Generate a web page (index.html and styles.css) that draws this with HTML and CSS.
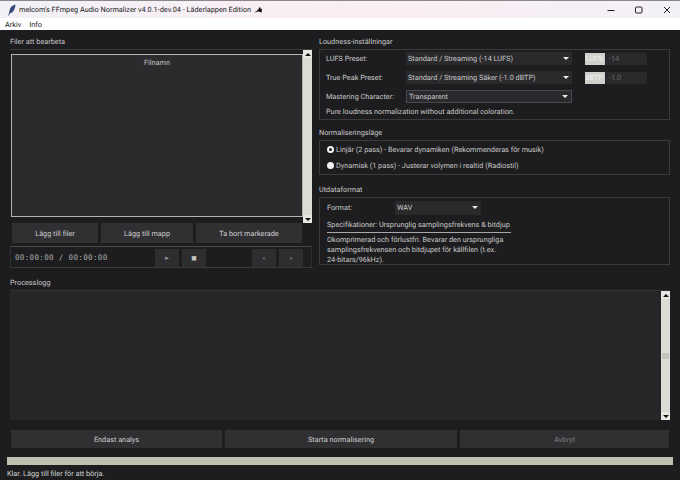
FILE: index.html
```html
<!DOCTYPE html>
<html lang="sv">
<head>
  <meta charset="UTF-8">
  <title>melcom's FFmpeg Audio Normalizer</title>
  <link rel="stylesheet" href="styles.css">
</head>
<body>
  <header class="titlebar">
    <svg class="app-icon" width="10" height="12" viewBox="0 0 10 12"><path d="M8.5 .5C5.5 1 3 3.5 2.5 6.5L2 9 1.2 11.5 2 11.6 3 9.2C6 9 8 6 8.5 .5Z" fill="#3a4a78"/></svg>
    <span class="title-text">melcom's FFmpeg Audio Normalizer v4.0.1-dev.04 - Läderlappen Edition</span>
    <svg class="bat-icon" width="8" height="7" viewBox="0 0 8 7"><path d="M0 6.5C2 5.5 3.5 4.5 4.5 3L6 .5 6.4 2.5 8 3 7.6 6.5 4.5 5.5Z" fill="#111"/></svg>
    <div class="window-controls">
      <svg width="8" height="8" viewBox="0 0 8 8"><path d="M.5 4.5h7" stroke="#222" fill="none"/></svg>
      <svg width="8" height="8" viewBox="0 0 8 8"><rect x=".5" y="1" width="6.5" height="6" rx="1" stroke="#222" fill="none"/></svg>
      <svg width="8" height="8" viewBox="0 0 8 8"><path d="M1 1l6 6M7 1L1 7" stroke="#222" fill="none"/></svg>
    </div>
  </header>
  <nav class="menubar"><span>Arkiv</span><span>Info</span></nav>

  <main class="app">
    <div class="top">
      <section class="left">
        <div class="section-label">Filer att bearbeta</div>
        <div class="files">
          <div class="file-list-wrap">
            <div class="file-list"><div class="file-head">Filnamn</div></div>
          </div>
          <div class="scrollbar">
            <div class="arrow"><i class="tri-up"></i></div>
            <div class="track"></div>
            <div class="arrow"><i class="tri-down"></i></div>
          </div>
        </div>
        <div class="file-buttons">
          <button class="btn">Lägg till filer</button>
          <button class="btn">Lägg till mapp</button>
          <button class="btn">Ta bort markerade</button>
        </div>
        <div class="player">
          <span class="time">00:00:00 / 00:00:00</span>
          <div class="player-btns">
            <button class="btn pbtn">►</button>
            <button class="btn pbtn stop">■</button>
          </div>
          <div class="player-btns">
            <button class="btn pbtn small">«</button>
            <button class="btn pbtn small">»</button>
          </div>
        </div>
      </section>

      <section class="right">
        <div class="section-label">Loudness-inställningar</div>
        <div class="frame loudness">
          <div class="row">
            <span class="row-label">LUFS Preset:</span>
            <div class="combo"><span>Standard / Streaming (-14 LUFS)</span><i class="combo-arrow"></i></div>
            <span class="chip">LUFS:</span>
            <span class="entry">-14</span>
          </div>
          <div class="row">
            <span class="row-label">True Peak Preset:</span>
            <div class="combo"><span>Standard / Streaming Säker (-1.0 dBTP)</span><i class="combo-arrow"></i></div>
            <span class="chip">dBTP:</span>
            <span class="entry">-1.0</span>
          </div>
          <div class="row">
            <span class="row-label">Mastering Character:</span>
            <div class="combo focus"><span>Transparent</span><i class="combo-arrow"></i></div>
          </div>
          <p class="note">Pure loudness normalization without additional coloration.</p>
        </div>

        <div class="section-label mode-label">Normaliseringsläge</div>
        <div class="frame mode">
          <div class="radio"><i class="dot on"></i>Linjär (2 pass) - Bevarar dynamiken (Rekommenderas för musik)</div>
          <div class="radio"><i class="dot"></i>Dynamisk (1 pass) - Justerar volymen i realtid (Radiostil)</div>
        </div>

        <div class="section-label out-label">Utdataformat</div>
        <div class="frame output">
          <div class="row format-row">
            <span class="format-label">Format:</span>
            <div class="combo format"><span>WAV</span><i class="combo-arrow"></i></div>
          </div>
          <div class="spec">Specifikationer: Ursprunglig samplingsfrekvens &amp; bitdjup</div>
          <p class="spec-text">Okomprimerad och förlustfri. Bevarar den ursprungliga<br>samplingsfrekvensen och bitdjupet för källfilen (t.ex.<br>24-bitars/96kHz).</p>
        </div>
      </section>
    </div>

    <section class="log">
      <div class="section-label">Processlogg</div>
      <div class="log-box">
        <div class="log-text"></div>
        <div class="scrollbar">
          <div class="arrow"><i class="tri-up"></i></div>
          <div class="track"><div class="thumb"></div></div>
          <div class="arrow"><i class="tri-down"></i></div>
        </div>
      </div>
    </section>

    <div class="actions">
      <button class="btn">Endast analys</button>
      <button class="btn">Starta normalisering</button>
      <button class="btn disabled">Avbryt</button>
    </div>
    <div class="progress"></div>
    <footer class="status">Klar. Lägg till filer för att börja.</footer>
  </main>
</body>
</html>
```

FILE: styles.css
```css
html, body {
  margin: 0;
  height: 480px;
  overflow: hidden;
}

body {
  font-family: Roboto, "Open Sans", sans-serif;
  font-size: 7.3px;
  text-rendering: geometricPrecision;
  color: #d0d0d0;
  background: #1d1d1f;
}

/* keeps the small text grey instead of colour fringed */
.titlebar, .menubar, .app {
  opacity: .999;
}

.titlebar {
  height: 18px;
  display: flex;
  align-items: center;
  padding-left: 7px;
  background: linear-gradient(90deg, #f2f1f6, #fbeef4 55%, #f3f1f6);
  color: #222;
  box-sizing: border-box;
  border-top: 1px solid #888;
}

.app-icon {
  margin-right: 2px;
}

.title-text {
  white-space: nowrap;
}

.bat-icon {
  margin-left: 3px;
}

.window-controls {
  margin-left: auto;
  display: flex;
  gap: 20px;
  padding-right: 9px;
}

.menubar {
  height: 12px;
  background: #fff;
  color: #222;
  display: flex;
  align-items: center;
  gap: 8px;
  padding-left: 5px;
}

.app {
  height: 450px;
  box-sizing: border-box;
  padding: 6px 10px 0;
}

.top {
  display: flex;
  gap: 7px;
}

.section-label {
  height: 13px;
  line-height: 11px;
  color: #c8c8c8;
}

.left {
  width: 302px;
}

.right {
  width: 351px;
}

.files {
  display: flex;
  height: 174px;
  box-sizing: border-box;
  border-top: 1px solid #3a3a3c;
}

.file-list-wrap {
  flex: 1;
  padding: 4px 0 0 1px;
}

.file-list {
  height: 163px;
  background: #2b2b2e;
  border: 1px solid #b4b4b0;
  box-sizing: border-box;
}

.file-head {
  text-align: center;
  color: #c4c4c4;
  line-height: 15px;
}

.file-buttons {
  display: grid;
  grid-template-columns: 86px 92px 106px;
  gap: 3px;
  padding-left: 2px;
}

.btn {
  height: 20px;
  padding: 0;
  border: 0;
  background: #303033;
  color: #cfcfcf;
  font-family: inherit;
  font-size: inherit;
  text-rendering: inherit;
}

.scrollbar {
  width: 9px;
  flex: none;
  display: flex;
  flex-direction: column;
  background: #dcdcd4;
}

.arrow {
  height: 8px;
  flex: none;
  display: flex;
  align-items: center;
  justify-content: center;
  background: #e8e8e2;
}

.tri-up, .tri-down {
  border-left: 3px solid transparent;
  border-right: 3px solid transparent;
}

.tri-up {
  border-bottom: 3px solid #111;
}

.tri-down {
  border-top: 3px solid #111;
}

.track {
  flex: 1;
  display: flex;
  align-items: center;
  justify-content: center;
}

.thumb {
  width: 7px;
  height: 6px;
  background: #c4c4bc;
}

.player {
  height: 22px;
  margin-top: 3px;
  display: flex;
  align-items: flex-end;
  border-top: 1px solid #4a4a4c;
  border-bottom: 1px solid #3a3a3c;
  border-left: 1px solid #2e2e30;
  border-right: 1px solid #2e2e30;
  box-sizing: border-box;
}

.time {
  width: 144px;
  padding-left: 4px;
  box-sizing: border-box;
  align-self: center;
  font-family: "DejaVu Sans Mono", monospace;
  font-size: 7.6px;
  letter-spacing: .3px;
  color: #a8a8a8;
}

.player-btns {
  display: flex;
  gap: 3px;
}

.player-btns + .player-btns {
  margin-left: 46px;
}

.pbtn {
  width: 24px;
  height: 18px;
  font-size: 6px;
  color: #999;
  background: #2e2e31;
}

.pbtn.stop {
  font-size: 9px;
  color: #c4c4c4;
}

.frame {
  border: 1px solid #3a3a3c;
  box-sizing: border-box;
}

.loudness {
  height: 71px;
  padding: 2px 0 0 6px;
}

.row {
  display: flex;
  align-items: center;
  height: 13px;
  margin-bottom: 6px;
}

.row-label {
  width: 80px;
  color: #c8c8c8;
}

.combo {
  width: 166px;
  height: 13px;
  display: flex;
  align-items: center;
  justify-content: space-between;
  padding: 0 3px 0 2px;
  box-sizing: border-box;
  background: #2a2a2d;
  color: #c8c8c8;
}

.combo.focus {
  border: 1px solid #4a4a4e;
}

.combo-arrow {
  width: 0;
  border-left: 3px solid transparent;
  border-right: 3px solid transparent;
  border-top: 3px solid #eee;
}

.chip {
  width: 20px;
  height: 12px;
  margin-left: 13px;
  line-height: 12px;
  text-align: center;
  background: #cfcfcb;
  color: #f4f4f4;
  overflow: hidden;
}

.entry {
  width: 41px;
  height: 12px;
  margin-left: 1px;
  padding-left: 3px;
  box-sizing: border-box;
  line-height: 12px;
  background: #2a2a2d;
  color: #6a6a6a;
}

.note {
  margin: -3px 0 0;
  line-height: 12px;
  color: #c8c8c8;
}

.mode-label {
  margin-top: 7px;
}

.mode {
  height: 35px;
  padding: 1px 0 0 7px;
}

.radio {
  display: flex;
  align-items: center;
  gap: 2px;
  height: 14px;
  margin-bottom: 2px;
  color: #c8c8c8;
}

.dot {
  width: 7px;
  height: 7px;
  border-radius: 50%;
  background: #f2f2f2;
  box-sizing: border-box;
}

.dot.on {
  border: 2px solid #f2f2f2;
  background: #1d1d1f;
}

.out-label {
  margin-top: 9px;
}

.output {
  height: 68px;
  padding: 2px 0 0 7px;
}

.format-row {
  margin-bottom: 0;
  height: 15px;
}

.format-label {
  width: 68px;
  color: #c8c8c8;
}

.format {
  width: 86px;
  height: 14px;
}

.spec {
  width: 184px;
  margin-top: 3px;
  height: 15px;
  line-height: 14px;
  box-sizing: border-box;
  border-bottom: 1px solid #a8a8a8;
  color: #c8c8c8;
  white-space: nowrap;
}

.spec-text {
  margin: 2px 0 0;
  line-height: 10px;
  color: #c8c8c8;
}

.log {
  margin-top: 9px;
}

.log-box {
  display: flex;
  height: 130px;
  background: #262628;
  border-top: 1px solid #333;
  box-sizing: border-box;
}

.log-text {
  flex: 1;
}

.actions {
  display: grid;
  grid-template-columns: 211px 232px 209px;
  gap: 3px;
  margin: 10px 0 0 1px;
}

.actions .btn {
  height: 18px;
}

.btn.disabled {
  color: #7e7e7e;
}

.progress {
  height: 8px;
  margin: 9px -3px 0;
  background: #c0c0b0;
}

.status {
  margin: 3px -3px 0;
  line-height: 12px;
  color: #d4d4d4;
}
```
